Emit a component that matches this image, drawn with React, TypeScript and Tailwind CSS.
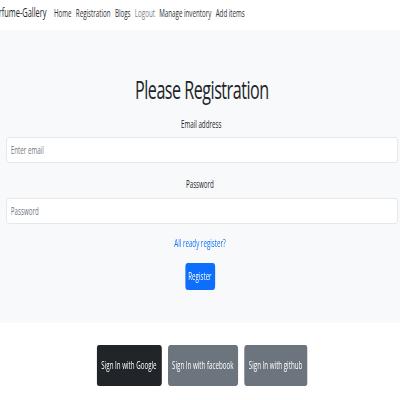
import { useState } from "react";

const font = { fontFamily: '"Open Sans", "Noto Sans", sans-serif' };

const links = ["Home", "Registration", "Blogs", "Logout", "Manage inventory", "Add items"];

const Navbar = () => {
  return (
    <nav className="h-[30px] bg-white flex items-center pb-[5px] overflow-hidden">
      <span className="text-[12px] leading-[17px] text-[#212529] -ml-[16px] mr-[12px] whitespace-nowrap">Perfume-Gallery</span>
      <div className="flex items-center gap-[7px] text-[10px] leading-[14px] whitespace-nowrap">
        {links.map((l) => (
          <a key={l} className={l === "Logout" ? "text-[#7a7f85]" : "text-[#2b2f33]"}>
            {l}
          </a>
        ))}
      </div>
    </nav>
  );
};

export default function App() {
  const [email, setEmail] = useState("");
  const [password, setPassword] = useState("");

  return (
    <div className="w-[400px] h-[400px] bg-white overflow-hidden">
      {/* page is squeezed horizontally like the screenshot */}
      <div className="w-[645px] origin-top-left scale-x-[0.62]" style={font}>
        <Navbar />
        {/* form section */}
        <section className="bg-[#f8f9fa] h-[293px] flex flex-col items-center pt-[43px]">
          <h1 className="text-[26px] leading-[32px] font-medium tracking-[-0.8px] text-[#212529] ml-[6px]">Please Registration</h1>
          <label className="mt-[12px] text-[10px] leading-[14px] text-[#212529] ml-[4px]">Email address</label>
          <input
            value={email}
            onChange={(e) => setEmail(e.target.value)}
            placeholder="Enter email"
            className="mt-[6px] ml-[6px] w-[632px] h-[26px] bg-white border border-[#dee2e6] rounded-[5px] px-[7px] text-[10px] placeholder:text-[#6c757d] outline-none"
          />
          <label className="mt-[14px] text-[10px] leading-[14px] text-[#212529]">Password</label>
          <input
            type="password"
            value={password}
            onChange={(e) => setPassword(e.target.value)}
            placeholder="Password"
            className="mt-[7px] ml-[6px] w-[632px] h-[26px] bg-white border border-[#dee2e6] rounded-[5px] px-[7px] text-[10px] placeholder:text-[#6c757d] outline-none"
          />
          <a className="mt-[12px] text-[10px] leading-[14px] text-[#0d6efd]">All ready register?</a>
          <button className="mt-[13px] h-[27px] w-[48px] bg-[#0d6efd] text-white text-[10px] rounded-[4px] whitespace-nowrap">
            Register
          </button>
        </section>
        {/* social sign in */}
        <div className="flex justify-center gap-[10px] pt-[22px] pl-[6px]">
          <button className="h-[41px] w-[105px] bg-[#212529] text-white text-[10px] rounded-[4px] whitespace-nowrap">
            Sign In with Google
          </button>
          <button className="h-[41px] w-[113px] bg-[#6c757d] text-white text-[10px] rounded-[4px] whitespace-nowrap">
            Sign In with facebook
          </button>
          <button className="h-[41px] w-[102px] bg-[#6c757d] text-white text-[10px] rounded-[4px] whitespace-nowrap">
            Sign In with github
          </button>
        </div>
      </div>
    </div>
  );
}
